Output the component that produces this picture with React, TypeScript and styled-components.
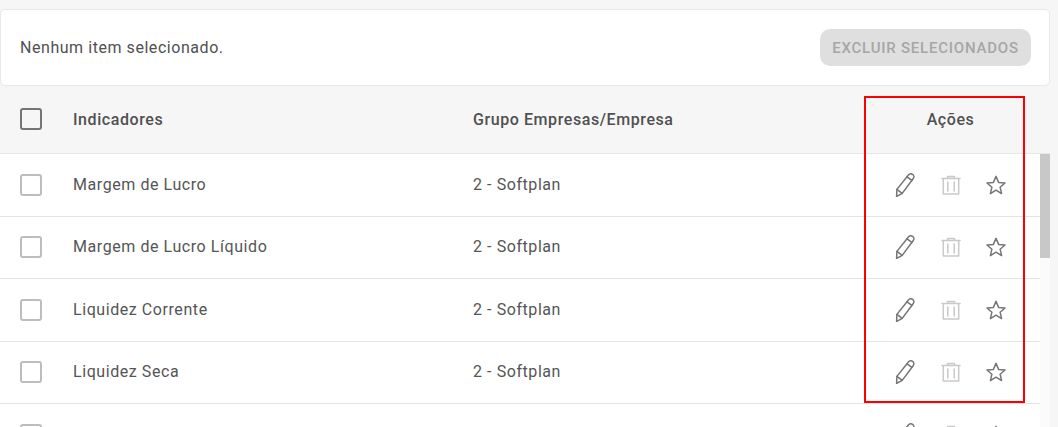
import React from "react";
import styled, { createGlobalStyle } from "styled-components";

const Global = createGlobalStyle`
  html, body { margin: 0; padding: 0; background: #f6f6f6; height: 100%; overflow: hidden; }
  body { font-family: Roboto, "Liberation Sans", sans-serif; color: #444; }
  #root { height: 427px; overflow: hidden; }
`;

const Page = styled.div`
  position: relative;
  width: 1050px;
  height: 427px;
  padding-top: 9px;
  box-sizing: border-box;
  overflow: hidden;
`;

const SelectionBar = styled.div`
  height: 77px;
  box-sizing: border-box;
  background: #fff;
  border: 1px solid #e8e8e8;
  border-radius: 5px;
  display: flex;
  align-items: center;
  justify-content: space-between;
  padding: 0 18px 0 19px;
`;

const SelectionText = styled.span`
  font-size: 16px;
  letter-spacing: 0.55px;
  color: #505050;
  margin-bottom: 1px;
`;

const DisabledButton = styled.button`
  width: 211px;
  height: 37px;
  border: 0;
  padding: 0;
  border-radius: 10px;
  background: #dfdfdf;
  color: #a6a6a6;
  font-family: inherit;
  font-size: 15px;
  font-weight: 500;
  letter-spacing: 0.78px;
`;

const Columns = styled.div`
  display: grid;
  grid-template-columns: 73px 400px 391px 176px;
  align-items: center;
`;

const HeadRow = styled(Columns)`
  height: 68px;
  padding-bottom: 1px;
  box-sizing: border-box;
  background: #f6f6f6;
  border-bottom: 1px solid #e6e6e6;
  width: 1050px;
  font-weight: 500;
  font-size: 16px;
  letter-spacing: 0.58px;
  color: #505050;
`;

const Body = styled.div`
  display: flex;
  background: #fff;
`;

const Rows = styled.div`
  width: 1040px;
`;

const Row = styled(Columns)`
  height: 62.5px;
  box-sizing: border-box;
  border-bottom: 1px solid #e4e4e4;
  font-size: 16px;
  letter-spacing: 0.57px;
  color: #555555;
`;

const Cell = styled.span`
  margin-bottom: 1px;
`;

const Track = styled.div`
  width: 10px;
  background: #fbfbfb;
`;

const Thumb = styled.div`
  width: 10px;
  height: 104px;
  background: #c8c8c8;
`;

const Box = styled.span<{ $head?: boolean }>`
  display: block;
  width: 22px;
  height: 22px;
  box-sizing: border-box;
  margin-left: 20px;
  border: 2px solid ${(p) => (p.$head ? "#757575" : "#bdbdbd")};
  border-radius: 3px;
`;

const ActionsHead = styled.span`
  text-align: center;
  padding-right: 3px;
`;

const Actions = styled.div`
  display: grid;
  grid-template-columns: 46px 45px 45px;
  justify-items: center;
  align-items: center;
  padding-left: 18px;
`;

const Icon = styled.svg<{ $muted?: boolean }>`
  display: block;
  width: 24px;
  height: 24px;
  fill: none;
  stroke: ${(p) => (p.$muted ? "#c9c9c9" : "#757575")};
  stroke-width: 1.5;
  stroke-linejoin: round;
  stroke-linecap: round;
`;

const Highlight = styled.div`
  position: absolute;
  left: 864px;
  top: 96px;
  width: 161px;
  height: 307px;
  box-sizing: border-box;
  border: 2px solid #f00;
  pointer-events: none;
`;

const Pencil = () => (
  <Icon viewBox="0 0 24 24">
    <path d="M3.6 23.4 L3.9 16.4 L15.4 2 C16.5 0.7 18.2 0.5 19.6 1.4 C21 2.4 21.3 4.1 20.3 5.5 L9.2 20.4 Z" />
    <path d="M3.9 16.4 L9.2 20.4 M14 3.8 L18.9 7.4" />
  </Icon>
);

const Trash = () => (
  <Icon viewBox="0 0 24 24" $muted>
    <path d="M3 5.6 H21 M8.5 5.6 V3.6 H15.5 V5.6 M4.3 5.6 V21 H19.7 V5.6 M8.8 9 V18 M15.2 9 V18" />
  </Icon>
);

const Star = () => (
  <Icon viewBox="0 0 24 24">
    <path d="M12 3.4 L14.6 9.4 L21 10 L16.1 14.2 L17.6 20.6 L12 17.2 L6.4 20.6 L7.9 14.2 L3 10 L9.4 9.4 Z" />
  </Icon>
);

const data = ["Margem de Lucro", "Margem de Lucro Líquido", "Liquidez Corrente", "Liquidez Seca", ""];

export default function App() {
  return (
    <Page>
      <Global />
      <SelectionBar>
        <SelectionText>Nenhum item selecionado.</SelectionText>
        <DisabledButton disabled>EXCLUIR SELECIONADOS</DisabledButton>
      </SelectionBar>
      <HeadRow>
        <Box $head />
        <span>Indicadores</span>
        <span>Grupo Empresas/Empresa</span>
        <ActionsHead>Ações</ActionsHead>
      </HeadRow>
      <Body>
        <Rows>
          {data.map((name, i) => (
            <Row key={i}>
              <Box />
              <Cell>{name}</Cell>
              <Cell>{name ? "2 - Softplan" : ""}</Cell>
              <Actions>
                <Pencil />
                <Trash />
                <Star />
              </Actions>
            </Row>
          ))}
        </Rows>
        <Track>
          <Thumb />
        </Track>
      </Body>
      <Highlight />
    </Page>
  );
}
